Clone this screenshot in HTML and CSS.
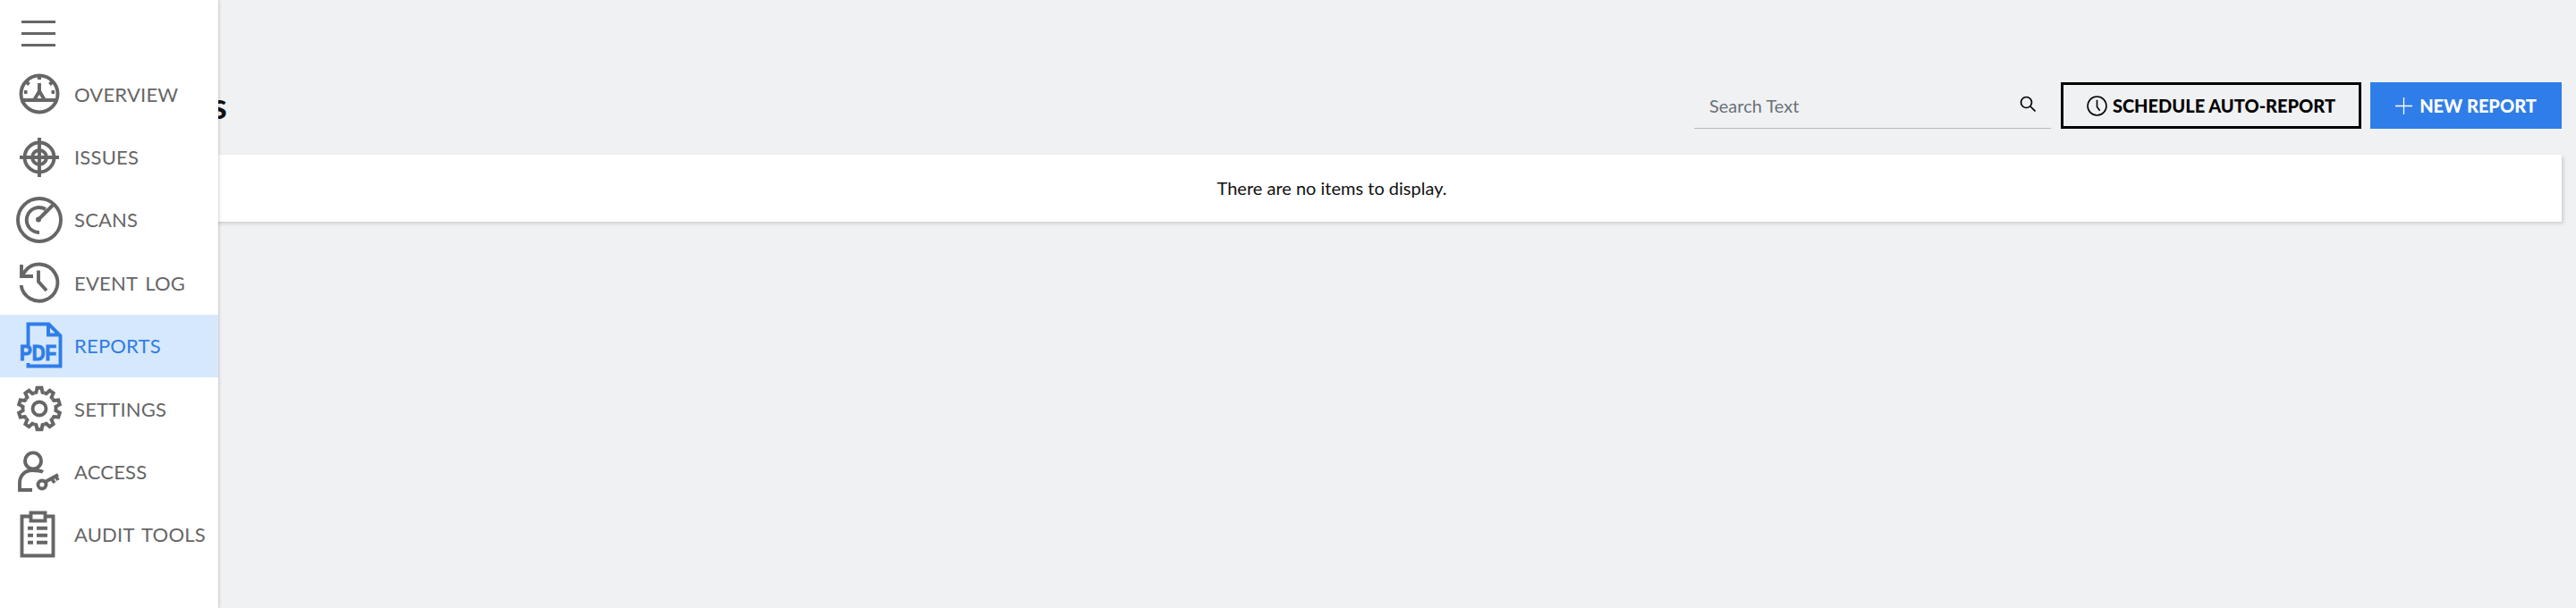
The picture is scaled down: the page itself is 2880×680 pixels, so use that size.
FILE: index.html
```html
<!DOCTYPE html>
<html lang="en">
<head>
<meta charset="utf-8">
<title>Reports</title>
<link rel="stylesheet" href="styles.css">
</head>
<body>
<div class="app">
  <main class="main">
    <header class="header">
      <h1 class="title">Reports</h1>
      <div class="search">
        <span class="search-text">Search Text</span>
        <svg class="search-icon" viewBox="0 0 18 18"><circle cx="7.5" cy="7.5" r="6"/><path d="M12 12l5.5 5.5"/></svg>
      </div>
      <button class="btn btn-outline">
        <svg class="btn-clock" viewBox="0 0 22 22"><circle cx="11" cy="11" r="10"/><path d="M11 4.5V12l3 4"/></svg>
        SCHEDULE AUTO-REPORT
      </button>
      <button class="btn btn-primary">
        <svg class="btn-plus" viewBox="0 0 18 18"><path d="M9 0V18M0 9H18"/></svg>
        NEW REPORT
      </button>
    </header>
    <section class="card">There are no items to display.</section>
  </main>

  <nav class="sidebar">
    <div class="menu-row">
      <svg class="menu-icon" viewBox="0 0 38 29"><path d="M0 1.5H38M0 14.5H38M0 27.5H38"/></svg>
    </div>
    <a class="nav-item">
      <svg class="icon" viewBox="0 0 52 52"><circle cx="26" cy="26" r="20.5"/><path d="M6.5 33H45.5M26 6V10M26 14V23M20 33L26 23L32 33M9 24H12.5M43 24H39.5M12 13L14.5 15.5M40 13L37.5 15.5"/></svg>
      <span>OVERVIEW</span>
    </a>
    <a class="nav-item">
      <svg class="icon" viewBox="0 0 52 52"><circle cx="26" cy="26" r="16.5"/><circle cx="26" cy="26" r="8"/><path d="M4 26H48M26 4V48"/></svg>
      <span>ISSUES</span>
    </a>
    <a class="nav-item">
      <svg class="icon" viewBox="0 0 52 52"><circle cx="26" cy="26" r="24"/><path d="M33 14A14 14 0 1 0 26 40M25 25.5L41 9.5"/><circle class="dot" cx="25" cy="25.5" r="3"/></svg>
      <span>SCANS</span>
    </a>
    <a class="nav-item">
      <svg class="icon" viewBox="0 0 52 52"><path d="M11.5 11.5A20.5 20.5 0 1 1 5.6 29M6 6V19H19M6 19L11.5 11.5M25 12.6V25L34 35"/></svg>
      <span>EVENT LOG</span>
    </a>
    <a class="nav-item active">
      <svg class="icon" viewBox="0 0 52 52"><path d="M13.5 25V1.5H36.5L49.5 14.5V48.5H13.5V45M36 2V13.5H49"/><text class="pdf" x="4" y="42" textLength="41" lengthAdjust="spacingAndGlyphs">PDF</text></svg>
      <span>REPORTS</span>
    </a>
    <a class="nav-item">
      <svg class="icon" viewBox="0 0 52 52">
        <defs><path id="tooth" d="M-5.72 -17.59L-3.53 -18.16L-2.51 -23.2L2.51 -23.2L3.53 -18.16L5.72 -17.59"/></defs>
        <g transform="translate(26 26)">
          <use href="#tooth"/><use href="#tooth" transform="rotate(36)"/><use href="#tooth" transform="rotate(72)"/><use href="#tooth" transform="rotate(108)"/><use href="#tooth" transform="rotate(144)"/><use href="#tooth" transform="rotate(180)"/><use href="#tooth" transform="rotate(216)"/><use href="#tooth" transform="rotate(252)"/><use href="#tooth" transform="rotate(288)"/><use href="#tooth" transform="rotate(324)"/>
        </g>
        <circle cx="26" cy="26" r="7.5"/>
      </svg>
      <span>SETTINGS</span>
    </a>
    <a class="nav-item">
      <svg class="icon" viewBox="0 0 52 52"><circle cx="19" cy="13.4" r="9"/><path d="M18 46H4V38C4 31 9 24 18 24C22 24 27 24 30 26"/><circle cx="29" cy="40" r="4.5"/><path d="M32.5 37L47 29M39.5 33L43 38M44 30.5L47 35"/></svg>
      <span>ACCESS</span>
    </a>
    <a class="nav-item">
      <svg class="icon" viewBox="0 0 52 52"><path d="M16 5.5H6.5V49.5H41.5V5.5H33"/><rect x="16.5" y="1.5" width="16" height="9"/><path d="M13 18.7H19M23 18.7H35M13 26.7H19M23 26.7H35M13 34.7H19M23 34.7H35"/></svg>
      <span>AUDIT TOOLS</span>
    </a>
  </nav>
</div>
</body>
</html>
```
FILE: styles.css
```css
* { box-sizing: border-box; }
html, body { margin: 0; height: 100%; }
body {
  background: #f0f1f3;
  font-family: Lato, "Liberation Sans", sans-serif;
  color: #000;
  overflow: hidden;
}
.app { position: relative; height: 680px; }

.main { padding: 92px 16px 0 106px; }
.header { display: flex; align-items: center; height: 52px; }
.title {
  margin: 0 auto 0 9px;
  font-size: 40px;
  line-height: 52px;
  font-weight: 700;
  color: #111;
}
.search {
  width: 399px;
  height: 52px;
  margin-right: 11px;
  padding: 0 17px;
  border-bottom: 1px solid #b9bbbe;
  display: flex;
  align-items: center;
  justify-content: space-between;
}
.search-text { font-size: 20px; color: #6b7178; }
.search-icon { width: 18px; height: 18px; margin-top: -3px; fill: none; stroke: #000; stroke-width: 1.7; }

.btn {
  height: 52px;
  display: flex;
  align-items: center;
  justify-content: center;
  font-family: Lato, "Liberation Sans", sans-serif;
  font-size: 20px;
  font-weight: 900;
  border-radius: 0;
  padding: 0;
}
.btn-outline { width: 336px; border: 3px solid #000; background: transparent; color: #000; gap: 6px; }
.btn-primary { width: 214px; margin-left: 10px; border: 0; background: #2f7de8; color: #fff; gap: 8px; }
.btn-clock { width: 23px; height: 23px; fill: none; stroke: #000; stroke-width: 1.5; }
.btn-plus { width: 19px; height: 19px; fill: none; stroke: #fff; stroke-width: 1.2; }

.card {
  margin: 29px 0 0 8px;
  height: 75px;
  padding-bottom: 2px;
  background: #fff;
  box-shadow: 2px 2px 4px rgba(0, 0, 0, .15);
  display: flex;
  align-items: center;
  justify-content: center;
  font-size: 20px;
  color: #111;
}

.sidebar {
  position: absolute;
  top: 0;
  left: 0;
  bottom: 0;
  width: 244px;
  background: #fff;
  box-shadow: 1px 0 3px rgba(0, 0, 0, .18);
}
.menu-row { height: 70px; padding: 23px 0 0 24px; }
.menu-icon { display: block; width: 38px; height: 29px; fill: none; stroke: #666; stroke-width: 3; }
.nav-item {
  height: 70.4px;
  padding-left: 18px;
  display: flex;
  align-items: center;
  gap: 13px;
  font-size: 22px;
  letter-spacing: .2px;
  word-spacing: 3px;
  color: #666;
}
.icon { width: 52px; height: 52px; flex: none; overflow: visible; fill: none; stroke: currentColor; stroke-width: 3.9; }
.icon .dot { fill: currentColor; stroke: none; }
.nav-item.active { background: #d6e8fb; color: #2f7de8; }
.pdf {
  font-family: "Liberation Sans", sans-serif;
  font-weight: 700;
  font-size: 23px;
  letter-spacing: 0;
  fill: currentColor;
  stroke: currentColor;
  stroke-width: 1;
}
```
